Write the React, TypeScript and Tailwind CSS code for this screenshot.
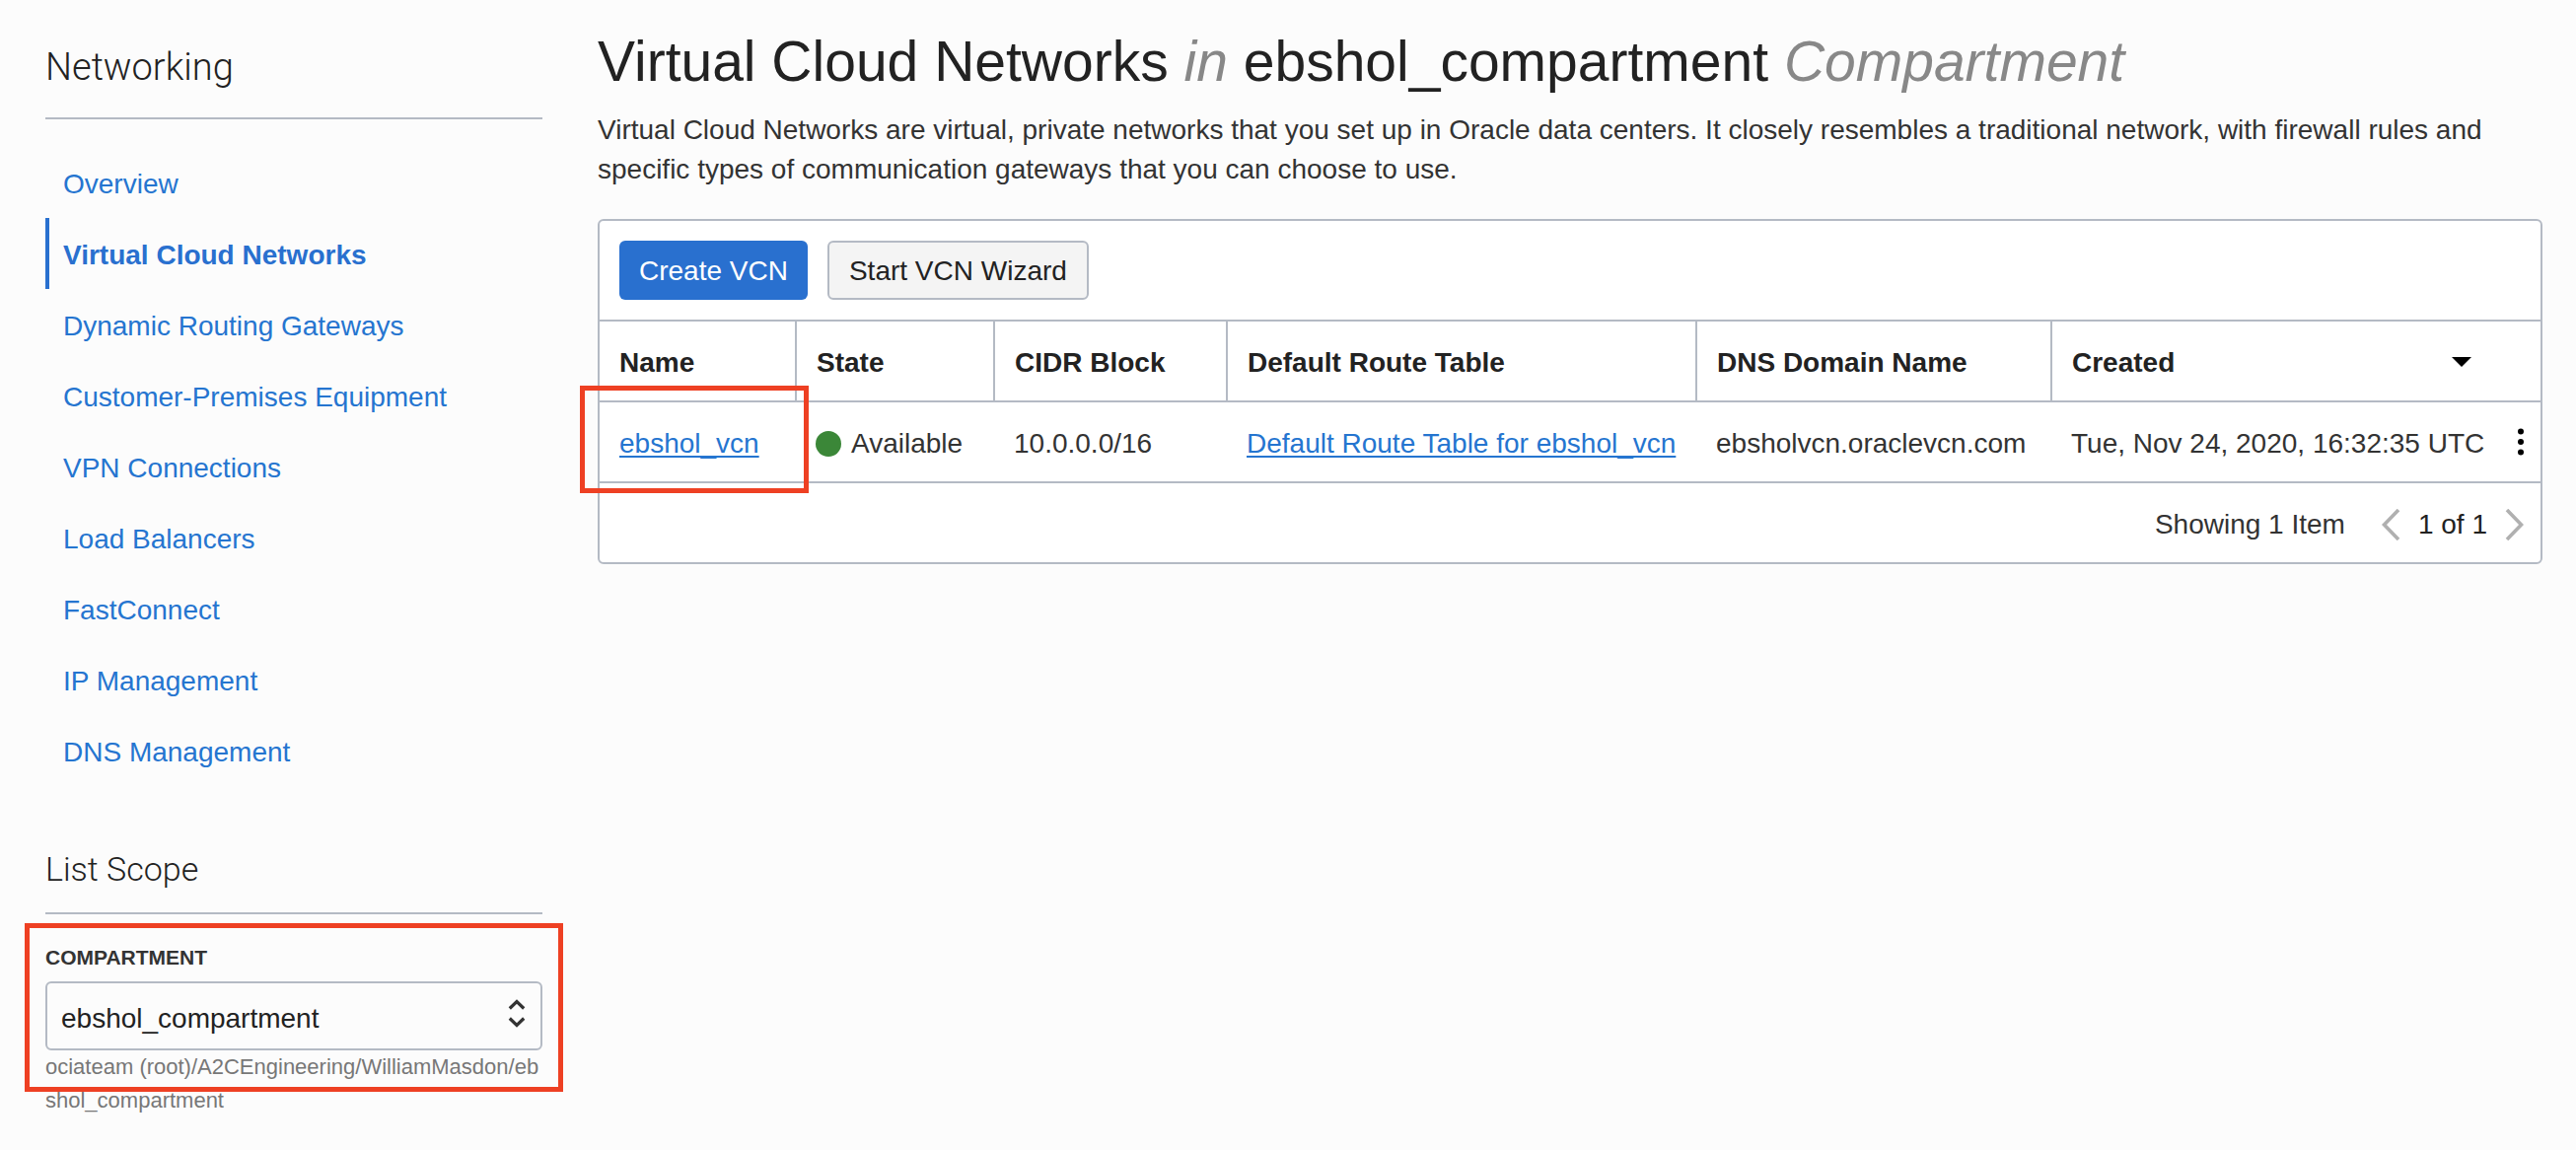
import React from "react";

const navItems = [
  "Overview",
  "Virtual Cloud Networks",
  "Dynamic Routing Gateways",
  "Customer-Premises Equipment",
  "VPN Connections",
  "Load Balancers",
  "FastConnect",
  "IP Management",
  "DNS Management",
];

const columns = ["Name", "State", "CIDR Block", "Default Route Table", "DNS Domain Name"];

function Sidebar() {
  return (
    <aside className="w-[504px] shrink-0">
      <h2 className="border-b-2 border-[#b4bac4] pt-11 pb-[27px] font-['Roboto','Liberation_Sans',sans-serif] text-[38px] leading-[48px] font-light text-[#222]">
        Networking
      </h2>
      <nav aria-label="Networking" className="mt-7">
        <ul>
          {navItems.map((item) => {
            const active = item === "Virtual Cloud Networks";
            return (
              <li key={item}>
                <a
                  href="#"
                  aria-current={active ? "page" : undefined}
                  className={
                    active
                      ? "flex h-[72px] items-center border-l-4 border-[#2970cf] pt-1 pl-3.5 font-bold text-[#2970cf]"
                      : "flex h-[72px] items-center border-l-4 border-transparent pt-1 pl-3.5 text-[#2575d0]"
                  }
                >
                  {item}
                </a>
              </li>
            );
          })}
        </ul>
      </nav>
      <h2 className="mt-[62px] border-b-2 border-[#b4bac4] pb-[22px] font-['Roboto','Liberation_Sans',sans-serif] text-[34px] leading-[44px] font-light text-[#222]">
        List Scope
      </h2>
      <div className="relative pt-[30px]">
        <label htmlFor="compartment" className="block text-[21px] leading-[28px] font-bold text-[#333]">
          COMPARTMENT
        </label>
        <div className="relative mt-2.5">
          <select
            id="compartment"
            className="h-[70px] w-full appearance-none rounded-md border-2 border-[#b4bac4] bg-[#fcfcfc] px-3.5 pt-1.5 text-[28px] text-[#222]"
          >
            <option>ebshol_compartment</option>
          </select>
          <svg
            className="pointer-events-none absolute top-[17px] right-[17px]"
            width="18"
            height="31"
            viewBox="0 0 18 31"
            fill="none"
            stroke="#333"
            strokeWidth="3.2"
            aria-hidden="true"
          >
            <path d="M1.8 10.5 9 3.5l7.2 7M1.8 20.5l7.2 7 7.2-7" />
          </svg>
        </div>
        <p className="text-[22px] leading-[34px] break-all text-[#777]">
          ociateam (root)/A2CEngineering/WilliamMasdon/ebshol_compartment
        </p>
        <div className="pointer-events-none absolute -inset-x-[21px] top-[9px] bottom-[26px] border-5 border-[#ee4023]" />
      </div>
    </aside>
  );
}

function VcnTable() {
  return (
    <table className="w-full table-fixed border-collapse text-left whitespace-nowrap">
      <colgroup>
        <col className="w-[199px]" />
        <col className="w-[201px]" />
        <col className="w-[236px]" />
        <col className="w-[476px]" />
        <col className="w-[360px]" />
        <col />
      </colgroup>
      <thead>
        <tr className="h-[82px] border-y-2 border-[#b4bac4] text-[#222]">
          {columns.map((column) => (
            <th key={column} scope="col" className="border-r-2 border-[#b4bac4] pt-1 pl-5 font-bold">
              {column}
            </th>
          ))}
          <th scope="col" className="pt-1 pr-[70px] pl-5 font-bold">
            <button type="button" className="flex w-full items-center justify-between">
              Created
              <svg width="20" height="12" viewBox="0 0 20 12" aria-hidden="true">
                <path d="M0 0h20L10 10z" fill="#000" />
              </svg>
            </button>
          </th>
        </tr>
      </thead>
      <tbody>
        <tr className="h-[82px] border-b-2 border-[#b4bac4] text-[#333]">
          <td className="relative pt-1 pl-5">
            <a href="#" className="text-[#2575d0] underline decoration-2 underline-offset-3">
              ebshol_vcn
            </a>
            <div className="pointer-events-none absolute -top-[17px] -right-[13px] -bottom-[12px] -left-[20px] border-5 border-[#ee4023]" />
          </td>
          <td className="pt-1 pl-5">
            <span className="flex items-center gap-2.5">
              <span className="size-[26px] rounded-full bg-[#3b8738]" />
              Available
            </span>
          </td>
          <td className="pt-1 pl-5">10.0.0.0/16</td>
          <td className="pt-1 pl-5">
            <a href="#" className="text-[#2575d0] underline decoration-2 underline-offset-3">
              Default Route Table for ebshol_vcn
            </a>
          </td>
          <td className="pt-1 pl-5">ebsholvcn.oraclevcn.com</td>
          <td className="pr-4 pl-5">
            <span className="flex items-center justify-between">
              <span className="pt-1">Tue, Nov 24, 2020, 16:32:35 UTC</span>
              <button type="button" aria-label="Actions">
                <svg width="8" height="28" viewBox="0 0 8 28" aria-hidden="true">
                  <circle cx="4" cy="3.5" r="3" />
                  <circle cx="4" cy="14" r="3" />
                  <circle cx="4" cy="24.5" r="3" />
                </svg>
              </button>
            </span>
          </td>
        </tr>
      </tbody>
    </table>
  );
}

export default function App() {
  return (
    <div className="flex min-h-screen gap-14 bg-[#fcfcfc] pr-[34px] pl-[46px] font-['Liberation_Sans',Arial,sans-serif] text-[28px] leading-[40px]">
      <Sidebar />
      <main className="min-w-0 flex-1 pt-7">
        <h1 className="text-[57px] leading-[68px] text-[#222]">
          Virtual Cloud Networks <em className="text-[#888]">in</em> ebshol_compartment{" "}
          <em className="text-[#888]">Compartment</em>
        </h1>
        <p className="mt-4 text-[#333]">
          Virtual Cloud Networks are virtual, private networks that you set up in Oracle data centers. It closely
          resembles a traditional network, with firewall rules and specific types of communication gateways that you
          can choose to use.
        </p>
        <section className="mt-[30px] rounded-md border-2 border-[#b4bac4] bg-white">
          <div className="flex gap-5 p-5">
            <button type="button" className="h-[60px] rounded-md bg-[#2970cf] px-5 pt-0.5 text-white">
              Create VCN
            </button>
            <button
              type="button"
              className="h-[60px] rounded-md border-2 border-[#b4bac4] bg-[#f4f4f4] px-5 pt-0.5 text-[#222]"
            >
              Start VCN Wizard
            </button>
          </div>
          <VcnTable />
          <div className="flex h-20 items-center justify-end pt-1 pr-4 text-[#333]">
            <span>Showing 1 Item</span>
            <button type="button" aria-label="Previous page" className="ml-9">
              <svg width="20" height="32" viewBox="0 0 20 32" fill="none" stroke="#b0b0b0" strokeWidth="3.6" aria-hidden="true">
                <path d="M18 1 3.5 16 18 31" />
              </svg>
            </button>
            <span className="mx-[18px] text-[#222]">1 of 1</span>
            <button type="button" aria-label="Next page">
              <svg width="20" height="32" viewBox="0 0 20 32" fill="none" stroke="#b0b0b0" strokeWidth="3.6" aria-hidden="true">
                <path d="m2 1 14.5 15L2 31" />
              </svg>
            </button>
          </div>
        </section>
      </main>
    </div>
  );
}
